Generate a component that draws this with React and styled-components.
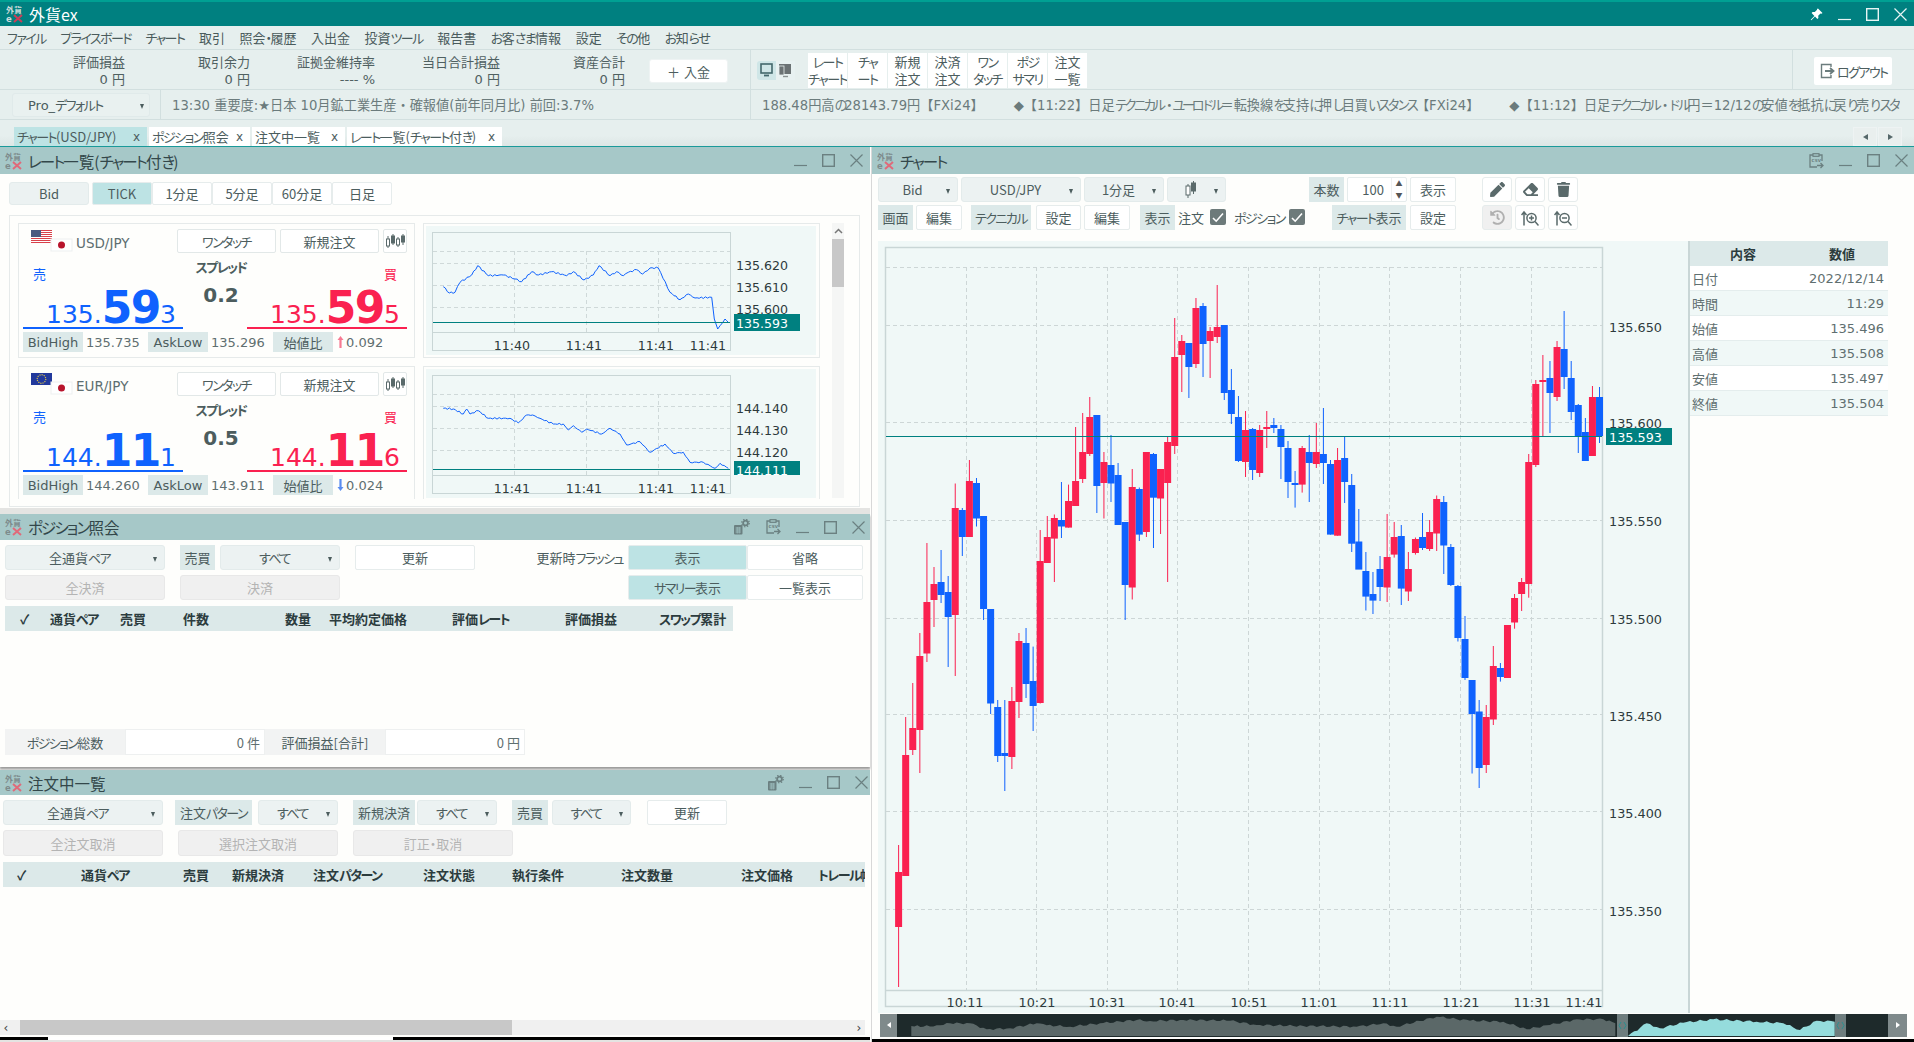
import React from 'react';
import styled, { createGlobalStyle } from 'styled-components';
import { FaPen, FaEraser, FaTrash, FaHistory } from 'react-icons/fa';

const Global = createGlobalStyle`
  html, body { margin: 0; padding: 0; width: 1914px; height: 1042px; overflow: hidden; background: #fefefc; }
  * { box-sizing: border-box; }
  body { font-family: "DejaVu Sans", "Noto Sans CJK JP", sans-serif; font-size: 13px; color: #4c5d5e; font-feature-settings: "palt"; }
`;

const Kana = styled.span`letter-spacing: var(--kana, -0.12em);`;
const k = s => {
  if (typeof s !== 'string') return s;
  return s.split(/([\u3040-\u30ff\u30fb]+)/).map((part, i) => (i % 2 ? <Kana key={i}>{part}</Kana> : part));
};

const Page = styled.div`width: 1914px; height: 1042px; display: flex; flex-direction: column; overflow: hidden; background: #fefefc;`;
const TitleBar = styled.div`height: 26px; flex: none; background: #008080; border-top: 2px solid #00a093; display: flex; align-items: center; padding-left: 6px; color: #fff; font-size: 16px;`;
const AppTitle = styled.span`margin-left: 5px; flex: 1; font-family: "Noto Sans CJK JP", sans-serif;`;
const Controls = styled.div`display: flex; align-items: center; gap: 15px; padding-right: ${p => p.$pr || 6}px; color: ${p => p.$c || '#6b8081'};`;
const MenuBar = styled.div`height: 24px; flex: none; background: #e6efee; border-bottom: 1px solid #d2dfdf; display: flex; align-items: center; padding-left: 7px; gap: 14.5px; font-family: "Noto Sans CJK JP", sans-serif; color: #4a5b5c;`;
const InfoBar = styled.div`height: 40px; flex: none; background: #e6efee; border-bottom: 1px solid #d2dfdf; display: flex;`;
const InfoCol = styled.div`width: 125px; text-align: right; font-size: 13px; line-height: 17px; padding-top: 4px; color: #4f6061;`;
const DepositBtn = styled.button`width: 79px; height: 24px; margin: 9px 0 0 24px; border: 1px solid #eef3f3; border-radius: 3px; background: #fff; font: inherit; color: #4c5d5e;`;
const Divider = styled.div`width: 1px; background: #d2dfdf; margin-left: ${p => p.$ml || 0}px; flex: none;`;
const DisplayToggle = styled.div`width: 38px; height: 19px; margin: 11px 0 0 6px; background: #cfe6e7; border-radius: 3px; display: flex;`;
const QuickGroup = styled.div`display: flex; gap: 1px; margin: 3px 0 0 13px; height: 35px;`;
const QuickBtn = styled.div`width: 39px; height: 35px; background: #fff; text-align: center; font-size: 13px; line-height: 17px; font-family: "Noto Sans CJK JP", sans-serif; white-space: pre; overflow: hidden; color: #4c5d5e;`;
const Spacer = styled.div`flex: 1;`;
const LogoutBtn = styled.div`width: 78px; height: 28px; margin: 7px 22px 0 21px; background: #fff; border-radius: 2px; display: flex; align-items: center; padding-left: 6px; gap: 2px; font-family: "Noto Sans CJK JP", sans-serif; font-size: 13px; white-space: nowrap;`;
const TickerBar = styled.div`height: 30px; flex: none; background: #e6efee; border-bottom: 1px solid #d2dfdf; display: flex; align-items: center; white-space: nowrap; overflow: hidden;`;
const LayoutSelect = styled.div`width: 138px; height: 24px; margin-left: 12px; border: 1px solid #e0eaea; border-radius: 3px; display: flex; align-items: center; justify-content: space-between; padding: 0 5px 0 15px; background: #e9f1f0;`;
const Caret = styled.span`width: 0; height: 0; border-left: 2.5px solid transparent; border-right: 2.5px solid transparent; border-top: 5px solid #4c5d5e; margin-top: 3px; flex: none;`;
const TickerSection = styled.div`--kana: -0.27em; font-feature-settings: normal; height: 29px; display: flex; align-items: center; flex: none; width: ${p => p.$w}px; border-left: 1px solid #d2dfdf; margin-left: ${p => p.$ml || 0}px; padding-left: ${p => p.$pl}px; color: #6b7b7c; overflow: hidden; font-size: 13.2px;`;
const TickerItem = styled.span`margin-right: 30px; flex: none;`;
const TabBar = styled.div`height: 27px; flex: none; background: linear-gradient(#e6efee 60%, #dde6e5); border-bottom: 1px solid #1a9a9a; display: flex; align-items: flex-end; padding-left: 14px; gap: 2px;`;
const Tab = styled.div`width: ${p => p.$w}px; height: 19px; background: ${p => p.$active ? '#bde3e4' : '#fff'}; display: flex; align-items: center; justify-content: space-between; padding: 0 7px 0 3px; white-space: nowrap; font-family: "Noto Sans CJK JP", "DejaVu Sans", sans-serif; font-size: 13px; overflow: hidden;`;
const TabClose = styled.span`font-family: "DejaVu Sans", sans-serif; font-size: 12px;`;
const TabNav = styled.div`margin-left: auto; margin-right: 12px; display: flex; gap: 1px;`;
const TabNavBtn = styled.div`width: 24px; height: 19px; background: #e9efee; border: 1px solid #eef3f3; display: flex; align-items: center; justify-content: center;`;
const TriSide = styled.span`width: 0; height: 0; border-top: 3px solid transparent; border-bottom: 3px solid transparent; ${p => p.$right ? 'border-left: 5px solid' : 'border-right: 5px solid'} ${p => p.$c || '#56686a'};`;

const Workspace = styled.div`flex: 1; display: flex; min-height: 0;`;
const LeftColumn = styled.div`width: 870px; flex: none; display: flex; flex-direction: column; background: #e4e4e2;`;
const Panel = styled.div`height: ${p => p.$h}px; margin-top: ${p => p.$mt || 0}px; flex: none; background: #fefefc; display: flex; flex-direction: column; overflow: hidden; box-shadow: ${p => p.$shadow ? '0 2px 2px #9a9a9a' : 'none'};`;
const PanelTitle = styled.div`height: ${p => p.$h || 27}px; flex: none; background: #a6c8c8; display: flex; align-items: center; padding-left: 5px; font-size: 15.5px; color: #33474a; font-family: "Noto Sans CJK JP", sans-serif;`;
const PanelName = styled.span`margin-left: 5px; flex: 1;`;

const ToolRow = styled.div`display: flex; height: ${p => p.$h || 24}px; margin-top: ${p => p.$mt || 0}px; padding-left: ${p => p.$pl || 0}px; flex: none; font-family: "Noto Sans CJK JP", "DejaVu Sans", sans-serif;`;
const SelectBox = styled.div`width: ${p => p.$w}px; margin-left: ${p => p.$ml || 0}px; background: #ecf2f2; border: 1px solid #e3ebeb; border-radius: 3px; display: flex; align-items: center; padding-right: 7px; flex: none;`;
const SelectText = styled.span`flex: 1; text-align: center; display: flex; justify-content: center; align-items: center;`;
const PlainBox = styled(SelectBox)`padding-right: 0; justify-content: center;`;
const FieldLabel = styled.div`width: ${p => p.$w}px; margin-left: ${p => p.$ml || 0}px; background: #dce9e9; display: flex; align-items: center; justify-content: center; flex: none; white-space: nowrap; overflow: hidden;`;
const Btn = styled.div`width: ${p => p.$w}px; margin-left: ${p => p.$ml || 0}px; background: ${p => p.$on ? '#bde3e4' : '#fff'}; border: 1px solid #e6ecec; border-radius: 2px; display: flex; align-items: center; justify-content: center; flex: none; white-space: nowrap; color: ${p => p.$c || 'inherit'};`;
const DisabledBtn = styled.div`width: ${p => p.$w}px; margin-left: ${p => p.$ml || 0}px; background: #f0f0f0; border: 1px solid #e8e8e8; border-radius: 3px; display: flex; align-items: center; justify-content: center; color: #b4b4b4; flex: none;`;
const PlainText = styled.div`margin-left: ${p => p.$ml || 0}px; width: ${p => p.$w}px; display: block; text-align: ${p => p.$right ? 'right' : 'left'}; line-height: 25px; white-space: nowrap; flex: none;`;

const RateBox = styled.div`flex: 1; margin: 10px 10px 1px 9px; border: 1px solid #e6eaea; padding: 7px 0 7px 8px; min-height: 0; display: flex; gap: 12px;`;
const RateList = styled.div`width: 802px; display: flex; flex-direction: column; gap: 8px; overflow: hidden;`;
const RateRow = styled.div`display: flex; gap: 8px; flex: none;`;
const RateCard = styled.div`width: 397px; height: 135px; border: 1px solid #e6eaea; padding: 5px 7px 0 4px; flex: none;`;
const CardTop = styled.div`display: flex; height: 24px;`;
const PairBox = styled.div`width: 154px; flex: none; display: flex; align-items: center; padding-left: 8px; padding-top: 3px; color: #5d6e70; font-size: 13.5px;`;
const CardBtn = styled.div`width: ${p => p.$w}px; margin-right: ${p => p.$last ? 0 : 4}px; border: 1px solid #e2e8e8; border-radius: 2px; display: flex; align-items: center; justify-content: center; font-family: "Noto Sans CJK JP", sans-serif; background: #fff; flex: none;`;
const PriceGrid = styled.div`display: grid; grid-template-columns: 160px 64px 160px; height: 76px;`;
const PriceCol = styled.div`display: flex; flex-direction: column; color: ${p => p.$c}; border-bottom: 2px solid ${p => p.$c};`;
const SideMark = styled.div`height: 14px; margin-top: 14px; font-size: 13px; line-height: 14px; font-family: "Noto Sans CJK JP", sans-serif; text-align: ${p => p.$right ? 'right' : 'left'}; padding: 0 10px;`;
const PriceRow = styled.div`height: 46px; padding-right: 7px; text-align: right; line-height: 46px; white-space: nowrap; padding-top: 4px;`;
const PriceSmall = styled.span`font-size: 25px;`;
const PriceBig = styled.span`font-size: 44px; font-weight: 700; letter-spacing: -1.4px;`;
const SpreadCol = styled.div`text-align: center; color: #4c5d5e; font-weight: 700; padding-left: 12px;`;
const SpreadLabel = styled.div`margin-top: 6px; font-size: 13px; line-height: 16px; font-family: "Noto Sans CJK JP", sans-serif; white-space: nowrap; margin-left: -10px; margin-right: -10px;`;
const SpreadValue = styled.div`font-size: 20px; line-height: 24px; margin-top: 8px;`;
const StatRow = styled.div`display: grid; grid-template-columns: 60px 65px 60px 65px 60px 1fr; height: 20px; margin-top: 3px;`;
const StatLabel = styled.div`background: #dce9e9; display: flex; align-items: center; justify-content: center; font-size: 13px; white-space: nowrap;`;
const StatValue = styled.div`display: flex; align-items: center; padding-left: 3px; font-size: 13px; color: #5f6f70; white-space: nowrap;`;
const ChartCard = styled.div`width: 397px; height: 135px; border: 1px solid #e6eaea; padding: 2px; flex: none; display: flex;`;
const Scroll = styled.div`width: 12px; height: 275px; background: #f5f6f5; display: flex; flex-direction: column; align-items: center; flex: none;`;
const ScrollUp = styled.div`height: 16px; display: flex; align-items: center; justify-content: center;`;
const ScrollThumb = styled.div`width: 12px; height: 48px; background: #c8c8c8;`;

const TableHead = styled.div`height: 25px; margin: 6px 0 0 ${p => p.$ml}px; width: ${p => p.$w}px; background: #dce9e9; display: flex; align-items: center; font-weight: 700; font-size: 13px; padding-left: ${p => p.$pl}px; overflow: hidden; flex: none; white-space: nowrap; color: #2c3c3e; font-family: "Noto Sans CJK JP", sans-serif;`;
const HeadCell = styled.div`width: ${p => p.$w}px; flex: none;`;
const GrowArea = styled.div`flex: 1;`;
const Footer = styled.div`display: flex; height: 26px; margin: 0 0 12px 5px; flex: none; font-family: "Noto Sans CJK JP", "DejaVu Sans", sans-serif;`;
const FootLabel = styled.div`width: 120px; background: #f2f3f3; display: flex; align-items: center; justify-content: center; white-space: nowrap;`;
const FootValue = styled.div`width: 140px; background: #fff; border: 1px solid #eef0f0; display: flex; align-items: center; justify-content: flex-end; padding-right: 4px; color: #5f6f70;`;
const HScroll = styled.div`height: 15px; margin: 0 5px 2px 0; background: #f0f0f0; display: flex; align-items: center; flex: none;`;
const HThumb = styled.div`width: 492px; height: 15px; background: #c8c8c8; margin-left: 8px;`;
const HArrow = styled.div`width: 12px; display: flex; justify-content: center; font-size: 12px; color: #444; line-height: 12px;`;
const HRest = styled.div`flex: 1;`;
const BlackStrip = styled.div`height: 3px; background: #000; display: flex; flex: none;`;
const WhiteBit = styled.div`width: 345px; margin-left: 48px; background: #fff;`;

const RightColumn = styled.div`flex: 1; margin-left: 1px; border-left: 1px solid #d8d8d8; display: flex; flex-direction: column; background: #fefefc; min-width: 0;`;
const ChartArea = styled.div`display: flex; margin: 11px 0 0 6px; height: 772px; flex: none;`;
const PlotBox = styled.div`width: 812px; height: 772px; background: #f0f8f7; flex: none; border-right: 2px solid #c9d6d6;`;
const SideTable = styled.div`width: 198px; flex: none;`;
const SideHead = styled.div`height: 25px; background: #dce9e9; display: grid; grid-template-columns: 106px 92px; align-items: center; font-weight: 700; text-align: center; color: #2c3c3e; font-family: "Noto Sans CJK JP", sans-serif;`;
const SideRow = styled.div`height: 25px; background: ${p => p.$alt ? '#f0f8f7' : '#fff'}; border-bottom: 1px solid #e4eded; display: flex; align-items: center; justify-content: space-between; padding: 0 4px 0 2px; color: #5f6f70;`;
const Navigator = styled.div`height: 23px; margin: 1px 7px 0 8px; flex: none; display: flex;`;
const IconBtn = styled.div`width: 30px; margin-left: ${p => p.$ml || 3}px; background: ${p => p.$off ? '#f0f0f0' : '#fff'}; border: 1px solid #e6ecec; border-radius: 3px; display: flex; align-items: center; justify-content: center; color: ${p => p.$off ? '#b0b0b0' : '#5a6a6b'}; flex: none; font-size: 15px;`;
const CheckBox = styled.div`width: 16px; height: 16px; margin: 4px 0 0 ${p => p.$ml}px; background: #6d7a7a; border-radius: 2px; color: #fff; display: flex; align-items: center; justify-content: center; flex: none;`;
const Spinner = styled.div`width: 60px; margin-left: 3px; background: #fff; border: 1px solid #e6ecec; border-radius: 2px; display: flex; flex: none;`;
const SpinVal = styled.div`flex: 1; display: flex; align-items: center; justify-content: flex-end; padding-right: 7px;`;
const SpinBtns = styled.div`width: 15px; border-left: 1px solid #eef0f0; display: flex; flex-direction: column; align-items: center; justify-content: space-around; font-size: 7px; line-height: 7px; color: #555;`;

const Logo = ({ s = 18 }) => (
  <svg width={s} height={s} viewBox="0 0 18 18" style={{ flex: 'none' }}>
    <text x="0" y="8" fontSize="8" fontWeight="700" fill="#7d8b8c" fontFamily="Noto Sans CJK JP">外貨</text>
    <text x="0" y="16.5" fontSize="8.5" fontWeight="700" fill="#7d8b8c" fontFamily="DejaVu Sans">e</text>
    <path d="M8 10l8 7M16 10l-8 7" stroke="#e06a7a" strokeWidth="2" />
  </svg>
);
const MainLogo = () => (
  <svg width="18" height="18" viewBox="0 0 18 18" style={{ flex: 'none' }}>
    <text x="0" y="8" fontSize="8" fontWeight="700" fill="#cfdcdc" fontFamily="Noto Sans CJK JP">外貨</text>
    <text x="0" y="16.5" fontSize="8.5" fontWeight="700" fill="#cfdcdc" fontFamily="DejaVu Sans">e</text>
    <path d="M8 10l8 7M16 10l-8 7" stroke="#cc3d58" strokeWidth="2" />
  </svg>
);
const Min = () => <svg width="13" height="13" viewBox="0 0 13 13" style={{ flex: 'none' }}><path d="M0 11.5h13" stroke="currentColor" strokeWidth="1.2" /></svg>;
const Max = () => <svg width="13" height="13" viewBox="0 0 13 13" style={{ flex: 'none' }}><rect x=".7" y=".7" width="11.6" height="11.6" fill="none" stroke="currentColor" strokeWidth="1.4" /></svg>;
const Close = () => <svg width="13" height="13" viewBox="0 0 13 13" style={{ flex: 'none' }}><path d="M.5.5l12 12M12.5.5l-12 12" stroke="currentColor" strokeWidth="1.2" /></svg>;
const Pin = () => <svg width="13" height="13" viewBox="0 0 13 13" style={{ flex: 'none' }}><path d="M8 .5l4.5 4.5-1 .7-1-.3-2.3 2.3.2 2.2-1 1L5 8.6 1.3 12.3.7 11.7 4.4 8 1.6 4.9l1-1 2.2.2L7.1 1.8l-.1-.9z" fill="#fff" /></svg>;
const CsvIcon = () => (
  <svg width="16" height="16" viewBox="0 0 16 16" style={{ flex: 'none' }}>
    <path d="M5 2H2v12h7M11 2h3v6" fill="none" stroke="#6b8081" strokeWidth="1.3" />
    <rect x="5" y=".7" width="6" height="2.6" fill="none" stroke="#6b8081" strokeWidth="1.2" />
    <text x="3.6" y="8.8" fontSize="4.2" fontWeight="700" fill="#6b8081" fontFamily="DejaVu Sans">CSV</text>
    <path d="M9 12.5h5.5M12.5 10l2.5 2.5-2.5 2.5" fill="none" stroke="#6b8081" strokeWidth="1.3" />
  </svg>
);
const CalcIcon = () => (
  <svg width="17" height="16" viewBox="0 0 17 16" style={{ flex: 'none' }}>
    <rect x="1" y="6" width="8.5" height="9.5" rx="1" fill="#6b8081" />
    <path d="M2.5 9h5.5M2.5 11h5.5M2.5 13h5.5M4.2 8v6.5M6.2 8v6.5" stroke="#a6c8c8" strokeWidth=".7" />
    <circle cx="12.5" cy="4" r="2.4" fill="none" stroke="#6b8081" strokeWidth="1.8" />
    <circle cx="12.5" cy="4" r="3.8" fill="none" stroke="#6b8081" strokeWidth="1.2" strokeDasharray="1.4 1.6" />
  </svg>
);
const Monitors = () => (
  <svg width="38" height="19" viewBox="0 0 38 19">
    <rect x="19" y="0" width="19" height="19" fill="#e8f1f1" />
    <rect x="4" y="3" width="11" height="9" fill="none" stroke="#43686c" strokeWidth="1.6" />
    <path d="M7 14.5h5" stroke="#43686c" strokeWidth="1.8" />
    <rect x="22" y="3" width="12" height="10" fill="#6b7274" />
    <rect x="22" y="5" width="5" height="9" fill="#6b7274" stroke="#e8f1f1" strokeWidth=".8" />
    <path d="M26 15.5h5" stroke="#8b9293" strokeWidth="1.4" />
  </svg>
);
const LogoutIcon = () => (
  <svg width="15" height="16" viewBox="0 0 15 16" style={{ flex: 'none' }}>
    <path d="M11 4V1.5H1.5v13H11V12" fill="none" stroke="#6b7c7d" strokeWidth="1.4" />
    <path d="M5 8h8M10 5l3.5 3L10 11" fill="none" stroke="#6b7c7d" strokeWidth="1.8" />
  </svg>
);
const CandleIcon = ({ c = '#5a6a6b' }) => (
  <svg width="20" height="16" viewBox="0 0 20 16">
    <g stroke={c} fill="none" strokeWidth="1">
      <path d="M3 3v12M8 1v11M13 4v10M18 1v11" />
      <rect x="1.5" y="6" width="3" height="7" fill="#fff" />
      <rect x="6.5" y="3" width="3" height="7" fill={c} />
      <rect x="11.5" y="6" width="3" height="6" fill="#fff" />
      <rect x="16.5" y="3" width="3" height="6" fill={c} />
    </g>
  </svg>
);
const SmallCandle = () => (
  <svg width="12" height="18" viewBox="0 0 12 18">
    <g stroke="#5a6a6b" fill="none"><path d="M3 3v14M8.5 0v13" /><rect x="1" y="5" width="4" height="9" fill="#fff" /><rect x="6.5" y="2" width="4" height="8" fill="#5a6a6b" /></g>
  </svg>
);
const ZoomArrow = ({ minus }) => (
  <svg width="18" height="18" viewBox="0 0 18 18">
    <g fill="none" stroke="#5a6a6b" strokeWidth="1.5">
      <path d="M3 3.5v13M.5 6L3 3l2.5 3" />
      <circle cx="10.5" cy="9" r="4.6" />
      <path d="M14 12.5l3.5 4" />
      <path d="M8 9h5" />
      {!minus && <path d="M10.5 6.5v5" />}
    </g>
  </svg>
);
const Check = () => <svg width="12" height="11" viewBox="0 0 12 11"><path d="M1 6l3.2 3.2L11 1.5" fill="none" stroke="#fff" strokeWidth="1.6" /></svg>;

const UsJp = ({ eu }) => (
  <svg width="45" height="24" viewBox="0 0 45 24" style={{ flex: 'none', marginTop: -3 }}>
    {eu ? (
      <g><rect x="0" y="1" width="21" height="12" fill="#22399c" /><circle cx="10.5" cy="7" r="4.3" fill="none" stroke="#d6c04a" strokeWidth="1.2" strokeDasharray="1.2 1" /></g>
    ) : (
      <g>
        <rect x="0" y="1" width="21" height="13" fill="#fff" />
        {[1, 3, 5, 7, 9, 11, 13].map(y => <rect key={y} x="0" y={y} width="21" height="1" fill="#d8414a" />)}
        <rect x="0" y="1" width="10" height="7" fill="#4a5a80" />
      </g>
    )}
    <rect x="20" y="10" width="21" height="12" fill="#fff" stroke="#edf0f0" />
    <circle cx="30.5" cy="16" r="3.5" fill="#b8142c" />
  </svg>
);

const zig = (pts, seed) => {
  const out = [];
  for (let i = 0; i < pts.length - 1; i++) {
    const [x0, y0] = pts[i]; const [x1, y1] = pts[i + 1];
    const n = Math.max(1, Math.round((x1 - x0) / 2.2));
    for (let j = 0; j < n; j++) {
      const t = j / n;
      const w = j === 0 ? 0 : Math.sin((i * 7 + j) * 2.7 + seed) * 0.8;
      out.push(`${(x0 + (x1 - x0) * t).toFixed(1)},${(y0 + (y1 - y0) * t + w).toFixed(1)}`);
    }
  }
  const l = pts[pts.length - 1];
  out.push(`${l[0]},${l[1]}`);
  return out.join(' ');
};
const LINE1 = [[70,413],[88,432],[105,430],[120,400],[155,378],[173,350],[205,380],[250,378],[285,390],[305,398],[335,368],[355,378],[395,368],[440,380],[460,368],[492,393],[520,378],[537,350],[570,380],[590,368],[610,380],[625,370],[650,362],[668,375],[690,357],[715,357],[750,430],[780,452],[805,435],[825,447],[875,445],[883,510],[893,540],[915,510],[925,520]].map(([x, y]) => [x / 3 - 6, y / 3 - 77]);
const LINE2 = [[70,778],[100,780],[130,795],[140,780],[150,795],[175,785],[205,808],[270,808],[295,822],[320,798],[338,798],[360,808],[400,825],[430,825],[445,843],[460,830],[485,850],[500,840],[545,855],[570,838],[600,855],[620,888],[660,878],[690,910],[735,885],[760,913],[790,910],[810,940],[850,940],[885,958],[900,943],[925,958]].map(([x, y]) => [x / 3 - 6, y / 3 - 220]);

const MiniChart = ({ id, line, labels, cur, curRect, lineY, curText, times }) => (
  <svg width="390" height="129" viewBox="0 0 390 129" style={{ background: '#f0f8f7', display: 'block' }} fontFamily="DejaVu Sans" fontSize="12.6">
    <defs><clipPath id={id}><rect x="308" y={curRect[0]} width="66" height={curRect[1]} /></clipPath></defs>
    <rect x="6.5" y="6.5" width="298" height="118" fill="none" stroke="#c9d6d6" />
    {[25, 37, 59, 81].map(y => <path key={y} d={`M7 ${y}.5H304`} stroke="#cfd9d9" strokeDasharray="4 3" />)}
    {[88, 160, 232].map(x => <path key={x} d={`M${x}.5 25V106`} stroke="#cfd9d9" strokeDasharray="4 3" />)}
    <path d="M7 106.5H304" stroke="#c9d6d6" />
    <polyline points={zig(line, id.length)} fill="none" stroke="#0f62fe" strokeWidth="1" />
    <path d={`M7 ${lineY}H304`} stroke="#008080" />
    {labels.map((t, i) => <text key={t} x="310" y={44 + i * 22} fill="#2d3a3c">{t}</text>)}
    <rect x="308" y={curRect[0]} width="66" height={curRect[1]} fill="#008080" />
    <text x="310" y={curText} fill="#fff" clipPath={`url(#${id})`}>{cur}</text>
    {times.map((t, i) => <text key={i} x={[86, 158, 230, 282][i]} y="124" textAnchor="middle" fill="#2d3a3c">{t}</text>)}
  </svg>
);

const Rate = ({ eu, pair, bidPre, bidBig, bidEnd, askEnd, spread, high, low, diff, up, ...chart }) => (
  <RateRow>
    <RateCard>
      <CardTop>
        <PairBox><UsJp eu={eu} />{pair}</PairBox>
        <CardBtn $w={99}>{k('ワンタッチ')}</CardBtn>
        <CardBtn $w={99}>{k('新規注文')}</CardBtn>
        <CardBtn $w={24} $last><CandleIcon /></CardBtn>
      </CardTop>
      <PriceGrid>
        <PriceCol $c="#0f62fe">
          <SideMark>売</SideMark>
          <PriceRow><PriceSmall>{bidPre}.</PriceSmall><PriceBig>{bidBig}</PriceBig><PriceSmall>{bidEnd}</PriceSmall></PriceRow>
        </PriceCol>
        <SpreadCol>
          <SpreadLabel>{k('スプレッド')}</SpreadLabel>
          <SpreadValue>{spread}</SpreadValue>
        </SpreadCol>
        <PriceCol $c="#fa2150">
          <SideMark $right>買</SideMark>
          <PriceRow><PriceSmall>{bidPre}.</PriceSmall><PriceBig>{bidBig}</PriceBig><PriceSmall>{askEnd}</PriceSmall></PriceRow>
        </PriceCol>
      </PriceGrid>
      <StatRow>
        <StatLabel>BidHigh</StatLabel><StatValue>{high}</StatValue>
        <StatLabel>AskLow</StatLabel><StatValue>{low}</StatValue>
        <StatLabel>始値比</StatLabel>
        <StatValue>
          <svg width="7" height="12" viewBox="0 0 7 12" style={{ marginRight: 2, marginLeft: 1 }}>
            <path d={up ? 'M3.5 0l3 4H4.6v8H2.4V4H.5z' : 'M3.5 12l3-4H4.6V0H2.4v8H.5z'} fill={up ? '#f77b93' : '#5a8cf0'} />
          </svg>
          {diff}
        </StatValue>
      </StatRow>
    </RateCard>
    <ChartCard><MiniChart line={chart.line} id={chart.cid} labels={chart.labels} cur={chart.cur} curRect={chart.curRect} lineY={chart.lineY} curText={chart.curText} times={chart.times} /></ChartCard>
  </RateRow>
);

const C = [
['r',845,987,872,927],['r',717,876,755,876],['r',683,755,728,750],['r',633,773,656,730],['r',543,662,602,653.5],
['r',567,627,584,600],['b',550,603,582,595],['b',576,667,592,617],['r',483.5,676,508,615],['b',508,556,510,537],
['r',460,537,481,537],['b',478,526.5,483,518.5],['b',516,620,516,609],['b',609,714,609,703.5],['b',700,762,707,756],
['b',700,791,753,756],['r',687,769,701,757],['r',633,718,641,702],['b',628,698,643,684],['b',646.6,731,681,706],
['r',530,703.5,561,703],['r',516,563,537,563],['r',514.5,582,518,538.6],['b',482,538,520,526.5],['r',484.6,527.6,501,527.6],
['r',427,506,481,506],['r',413,483,452,479],['r',397,456,417,454],['b',415,513,415,486],['r',452,518.5,462,483],
['b',435,502,465,483.5],['b',463,525,475,525],['b',522,620,522,585],['r',469,599.5,487,587.5],['b',487.5,541,489,534.6],
['r',452,537,452,532],['b',453,548,454,497.7],['r',469,534,469,498.5],['r',436,582,442,483],['r',318,454,357,446],
['r',335,392,341,355],['b',343,398,343,367],['r',298,368,308,364],['b',303,377,306,344],['r',327,378,331,341],
['r',285,343,327,337],['b',325,400,325,393],['b',369,424,390,414],['b',396,462,417,461],['r',411,477,430,462],
['b',428,480,429,470],['r',425,477,430,473],['r',411,448,427,429],['b',418,433,425,428],['b',425,479,429,447],
['b',441,498,448,482],['b',471,507.6,483,484],['r',446,492.6,448,484.6],['b',435,502,452,463],['r',423,468,452,464],
['b',408,484,454,463],['b',460,534.6,464,534.6],['r',448,535.7,460,535.7],['b',437,503,458,482],['b',474,552,485,543.7],
['b',509,569,541.5,569.6],['b',552,610.5,571,596.6],['b',572,614,594,600.6],['b',556,601,569,587],['r',514,602,557,587.5],
['r',522,557.6,537,554.6],['b',525,605,536,588.6],['r',552,601,569,591.5],['r',537.5,554.6,539,553],['b',513,550,537,548],
['r',520,551,532,549],['r',495.5,551,499,533.5],['b',496,574,502,545.5],['b',544,586,547,585],['b',585,641.5,586,638],
['b',616,680,639,678],['b',680,773.5,680,714],['b',700,788,711.5,768],['r',705,773,717,765],['r',646,725,666,719.5],
['b',663,681.6,668,677],['r',625,678,625,678],['r',594,628.7,598,622.5],['r',578,611,582,594],['r',454,597.7,462,584],
['r',380,467,384,465],['r',355,436,380,382],['b',361,433,378,393],['r',341,401,347,397],['b',311,389,349,377],
['b',361,420,378,412],['b',404,453,405,436],['b',418,461,432,461],['r',386,456,397,456],['b',387,443,397,436],
];

const PriceChart = () => (
  <svg width="810" height="772" viewBox="878 241 810 772" fontFamily="DejaVu Sans" fontSize="12.8" style={{ display: 'block' }}>
    <rect x="885.5" y="247.5" width="717" height="759" fill="none" stroke="#c9d6d6" strokeWidth="1.5" />
    {[267, 325, 422, 520, 618, 714, 811, 909].map(y => <path key={y} d={`M886 ${y}.5H1602`} stroke="#cdd6d6" strokeDasharray="4 3" />)}
    {[966, 1036, 1107, 1177, 1248, 1319, 1389, 1460, 1531].map(x => <path key={x} d={`M${x}.5 267V990`} stroke="#cdd6d6" strokeDasharray="4 3" />)}
    <path d="M886 990.5H1602" stroke="#c9d6d6" strokeWidth="1.5" />
    {C.map(([c, wt, wb, bt, bb], i) => {
      const x = 898.6 + 7.08 * i;
      const col = c === 'r' ? '#fa2150' : '#0f62fe';
      return (
        <g key={i} fill={col}>
          <rect x={x - 0.5} y={wt} width="1" height={wb - wt} />
          <rect x={x - 3.5} y={bt} width="7" height={Math.max(bb - bt, 2)} />
        </g>
      );
    })}
    <path d="M886 436.5H1602" stroke="#008080" />
    {[['135.650', 327], ['135.600', 423], ['135.550', 521], ['135.500', 618.6], ['135.450', 715.7], ['135.400', 812.6], ['135.350', 911]].map(([t, y]) => (
      <text key={t} x="1609" y={y + 5} fill="#2d3a3c">{t}</text>
    ))}
    <rect x="1606" y="428" width="66" height="17" fill="#008080" />
    <text x="1609" y="442" fill="#fff">135.593</text>
    {[['10:11', 965], ['10:21', 1037], ['10:31', 1107], ['10:41', 1177], ['10:51', 1249], ['11:01', 1319], ['11:11', 1390], ['11:21', 1461], ['11:31', 1532], ['11:41', 1584]].map(([t, x]) => (
      <text key={t} x={x} y="1007" textAnchor="middle" fill="#2d3a3c">{t}</text>
    ))}
  </svg>
);

const zx = x => (x / 1.5).toFixed(1);
const zy = y => ((y - 162) / 3).toFixed(1);
const rough = (pts, seed) => {
  const out = [];
  for (let i = 0; i < pts.length - 1; i++) {
    const [x0, y0] = pts[i]; const [x1, y1] = pts[i + 1];
    const n = Math.max(1, Math.round((x1 - x0) / 5));
    for (let j = 0; j < n; j++) {
      const t = j / n;
      out.push([x0 + (x1 - x0) * t, y0 + (y1 - y0) * t + (j ? Math.sin((i + j) * 1.9 + seed) * 3 : 0)]);
    }
  }
  out.push(pts[pts.length - 1]);
  return out;
};
const GRAY = [...rough([[62,198],[80,200],[100,196],[120,190],[150,190],[175,208],[210,205],[250,190],[265,196],[300,200],[345,190],[400,180],[420,183],[470,180],[540,182],[580,195],[650,198],[730,200],[770,190],[790,200],[850,170],[900,182],[950,185],[985,208],[1020,195],[1060,178],[1100,178],[1118,190]], 1), [1118,228], [62,228]];
const TEAL = [[1137,228], ...rough([[1137,228],[1165,190],[1185,205],[1220,188],[1265,178],[1330,185],[1370,190],[1395,210],[1420,182],[1447,185]], 2), [1447,228]];
const Nav = () => (
  <svg width="1027" height="23" viewBox="10 0 1027 23" style={{ display: 'block' }}>
    <rect x="10" y="0" width="1027" height="23" fill="#1e2a2b" />
    <rect x="10" y="0" width="17" height="23" fill="#7f8a8b" />
    <path d="M21 8v6l-4-3z" fill="#fff" />
    <polygon points={GRAY.map(([x, y]) => `${zx(x)},${zy(y)}`).join(' ')} fill="#5b6868" />
    <polygon points={TEAL.map(([x, y]) => `${zx(x)},${zy(y)}`).join(' ')} fill="#95dcdc" />
    <rect x="747" y="0" width="11" height="23" fill="#6e7d7e" />
    <rect x="965" y="0" width="11" height="23" fill="#6e7d7e" />
    <path d="M751 8l-2 3.5 2 3.5M754 8l2 3.5-2 3.5M969 8l-2 3.5 2 3.5M972 8l2 3.5-2 3.5" stroke="#2a8f90" fill="none" />
    <rect x="1018" y="0" width="19" height="23" fill="#7f8a8b" />
    <path d="M1026 8v6l4-3z" fill="#fff" />
  </svg>
);

const Sel = ({ w, ml, children }) => <SelectBox $w={w} $ml={ml}><SelectText>{k(children)}</SelectText><Caret /></SelectBox>;
const WinControls = ({ pr, children }) => <Controls $pr={pr}>{children}<Min /><Max /><Close /></Controls>;

const posHead = [['✓', 30], ['通貨ペア', 70], ['売買', 63], ['件数', 102], ['数量', 44], ['平均約定価格', 123], ['評価レート', 113], ['評価損益', 94], ['スワップ累計', 74]];
const ordHead = [['✓', 64], ['通貨ペア', 102], ['売買', 49], ['新規決済', 81], ['注文パターン', 110], ['注文状態', 89], ['執行条件', 109], ['注文数量', 120], ['注文価格', 77], ['トレール幅', 60]];
const TIMES1 = ['11:40', '11:41', '11:41', '11:41'];

export default function App() {
  return (
    <Page>
      <Global />
      <TitleBar>
        <MainLogo /><AppTitle>外貨ex</AppTitle>
        <Controls $pr={7} $c="#e8f4f4"><Pin /><Min /><Max /><Close /></Controls>
      </TitleBar>
      <MenuBar>
        {['ファイル', 'プライスボード', 'チャート', '取引', '照会・履歴', '入出金', '投資ツール', '報告書', 'お客さま情報', '設定', 'その他', 'お知らせ'].map(m => <span key={m}>{k(m)}</span>)}
      </MenuBar>
      <InfoBar>
        {[['評価損益', '0 円'], ['取引余力', '0 円'], ['証拠金維持率', '---- %'], ['当日合計損益', '0 円'], ['資産合計', '0 円']].map(([a, b]) => (
          <InfoCol key={a}>{a}<br />{b}</InfoCol>
        ))}
        <DepositBtn>＋ 入金</DepositBtn>
        <Divider $ml={22} />
        <DisplayToggle><Monitors /></DisplayToggle>
        <QuickGroup>
          {['レート\nチャート', 'チャ\nート', '新規\n注文', '決済\n注文', 'ワン\nタッチ', 'ポジ\nサマリ', '注文\n一覧'].map(q => <QuickBtn key={q}>{k(q)}</QuickBtn>)}
        </QuickGroup>
        <Spacer />
        <Divider />
        <LogoutBtn><LogoutIcon />{k('ログアウト')}</LogoutBtn>
      </InfoBar>
      <TickerBar>
        <LayoutSelect><span>Pro_{k('デフォルト')}</span><Caret /></LayoutSelect>
        <TickerSection $w={590} $ml={10} $pl={11}>13:30 重要度:★日本 10月鉱工業生産・確報値(前年同月比) 前回:3.7%</TickerSection>
        <TickerSection $w={1150} $pl={11}>
          <TickerItem>{k('188.48円高の28143.79円【FXi24】')}</TickerItem>
          <TickerItem>{k('◆【11:22】日足テクニカル・ユーロドル＝転換線を支持に押し目買いスタンス【FXi24】')}</TickerItem>
          <TickerItem>{k('◆【11:12】日足テクニカル・ドル円＝12/12の安値を抵抗に戻り売りスタンス【FXi24】')}</TickerItem>
        </TickerSection>
      </TickerBar>
      <TabBar>
        <Tab $w={133} $active><span>{k('チャート(USD/JPY)')}</span><TabClose>x</TabClose></Tab>
        <Tab $w={101}><span>{k('ポジション照会')}</span><TabClose>x</TabClose></Tab>
        <Tab $w={93}><span>{k('注文中一覧')}</span><TabClose>x</TabClose></Tab>
        <Tab $w={155}><span>{k('レート一覧(チャート付き)')}</span><TabClose>x</TabClose></Tab>
        <TabNav>
          <TabNavBtn><TriSide /></TabNavBtn>
          <TabNavBtn><TriSide $right /></TabNavBtn>
        </TabNav>
      </TabBar>
      <Workspace>
        <LeftColumn>
          <Panel $h={361}>
            <PanelTitle><Logo /><PanelName>{k('レート一覧(チャート付き)')}</PanelName><WinControls pr={7} /></PanelTitle>
            <ToolRow $mt={8} $h={23} $pl={9}>
              <PlainBox $w={80}>Bid</PlainBox>
              <Btn $w={60} $ml={3} $on>TICK</Btn>
              <Btn $w={60}>1分足</Btn>
              <Btn $w={60}>5分足</Btn>
              <Btn $w={60}>60分足</Btn>
              <Btn $w={60}>日足</Btn>
            </ToolRow>
            <RateBox>
              <RateList>
                <Rate pair="USD/JPY" bidPre="135" bidBig="59" bidEnd="3" askEnd="5" spread="0.2" high="135.735" low="135.296" diff="0.092" up
                  cid="c1" line={LINE1} labels={['135.620', '135.610', '135.600']} cur="135.593" curRect={[88, 17]} lineY="96.5" curText="101.5" times={TIMES1} />
                <Rate eu pair="EUR/JPY" bidPre="144" bidBig="11" bidEnd="1" askEnd="6" spread="0.5" high="144.260" low="143.911" diff="0.024"
                  cid="c22" line={LINE2} labels={['144.140', '144.130', '144.120']} cur="144.111" curRect={[92, 14]} lineY="100.5" curText="106" times={['11:41', '11:41', '11:41', '11:41']} />
              </RateList>
              <Scroll>
                <ScrollUp><svg width="9" height="6" viewBox="0 0 9 6"><path d="M1 5l3.5-3.5L8 5" fill="none" stroke="#777" strokeWidth="1.5" /></svg></ScrollUp>
                <ScrollThumb />
              </Scroll>
            </RateBox>
          </Panel>

          <Panel $h={253} $mt={6} $shadow>
            <PanelTitle $h={26}><Logo /><PanelName>{k('ポジション照会')}</PanelName><WinControls pr={5}><CalcIcon /><CsvIcon /></WinControls></PanelTitle>
            <ToolRow $mt={5} $h={25} $pl={5}>
              <Sel w={160}>全通貨ペア</Sel>
              <FieldLabel $w={35} $ml={15}>売買</FieldLabel>
              <Sel w={120} ml={5}>すべて</Sel>
              <Btn $w={120} $ml={15}>更新</Btn>
              <PlainText $w={148} $right>{k('更新時フラッシュ')}</PlainText>
              <Btn $w={119} $ml={5} $on>表示</Btn>
              <Btn $w={116}>省略</Btn>
            </ToolRow>
            <ToolRow $mt={5} $h={25} $pl={5}>
              <DisabledBtn $w={160}>全決済</DisabledBtn>
              <DisabledBtn $w={160} $ml={15}>決済</DisabledBtn>
              <Btn $w={119} $ml={288} $on>{k('サマリー表示')}</Btn>
              <Btn $w={116}>一覧表示</Btn>
            </ToolRow>
            <TableHead $ml={5} $w={728} $pl={15}>
              {posHead.map(([t, w]) => <HeadCell key={t} $w={w}>{k(t)}</HeadCell>)}
            </TableHead>
            <GrowArea />
            <Footer>
              <FootLabel>{k('ポジション総数')}</FootLabel>
              <FootValue>0 件</FootValue>
              <FootLabel>評価損益[合計]</FootLabel>
              <FootValue>0 円</FootValue>
            </Footer>
          </Panel>

          <Panel $h={270} $mt={3}>
            <PanelTitle $h={25}><Logo /><PanelName>注文中一覧</PanelName><WinControls pr={2}><CalcIcon /></WinControls></PanelTitle>
            <ToolRow $mt={5} $h={25} $pl={3}>
              <Sel w={160}>全通貨ペア</Sel>
              <FieldLabel $w={77} $ml={12}>{k('注文パターン')}</FieldLabel>
              <Sel w={80} ml={6}>すべて</Sel>
              <FieldLabel $w={62} $ml={15}>新規決済</FieldLabel>
              <Sel w={80} ml={2}>すべて</Sel>
              <FieldLabel $w={36} $ml={15}>売買</FieldLabel>
              <Sel w={79} ml={4}>すべて</Sel>
              <Btn $w={80} $ml={16}>更新</Btn>
            </ToolRow>
            <ToolRow $mt={5} $h={26} $pl={3}>
              <DisabledBtn $w={160}>全注文取消</DisabledBtn>
              <DisabledBtn $w={160} $ml={15}>選択注文取消</DisabledBtn>
              <DisabledBtn $w={160} $ml={15}>訂正・取消</DisabledBtn>
            </ToolRow>
            <TableHead $ml={3} $w={862} $pl={14}>
              {ordHead.map(([t, w]) => <HeadCell key={t} $w={w}>{k(t)}</HeadCell>)}
            </TableHead>
            <GrowArea />
            <HScroll>
              <HArrow>‹</HArrow><HThumb /><HRest /><HArrow>›</HArrow>
            </HScroll>
            <BlackStrip><WhiteBit /></BlackStrip>
          </Panel>
        </LeftColumn>

        <RightColumn>
          <PanelTitle><Logo /><PanelName>{k('チャート')}</PanelName><WinControls pr={6}><CsvIcon /></WinControls></PanelTitle>
          <ToolRow $mt={3} $h={25} $pl={6}>
            <Sel w={80}>Bid</Sel>
            <Sel w={120} ml={3}>USD/JPY</Sel>
            <Sel w={80} ml={3}>1分足</Sel>
            <Sel w={59} ml={3}><SmallCandle /></Sel>
            <FieldLabel $w={35} $ml={83}>本数</FieldLabel>
            <Spinner><SpinVal>100</SpinVal><SpinBtns><span>▲</span><span>▼</span></SpinBtns></Spinner>
            <Btn $w={46} $ml={3}>表示</Btn>
            <IconBtn $ml={26}><FaPen /></IconBtn>
            <IconBtn><FaEraser /></IconBtn>
            <IconBtn><FaTrash /></IconBtn>
          </ToolRow>
          <ToolRow $mt={3} $h={25} $pl={6}>
            <FieldLabel $w={35}>画面</FieldLabel>
            <Btn $w={46} $ml={3}>編集</Btn>
            <FieldLabel $w={60} $ml={9}>{k('テクニカル')}</FieldLabel>
            <Btn $w={45} $ml={5}>設定</Btn>
            <Btn $w={46} $ml={3}>編集</Btn>
            <FieldLabel $w={35} $ml={10}>表示</FieldLabel>
            <PlainText $w={26} $ml={3}>注文</PlainText>
            <CheckBox $ml={6}><Check /></CheckBox>
            <PlainText $w={50} $ml={8}>{k('ポジション')}</PlainText>
            <CheckBox $ml={5}><Check /></CheckBox>
            <FieldLabel $w={74} $ml={27}>{k('チャート表示')}</FieldLabel>
            <Btn $w={46} $ml={4}>設定</Btn>
            <IconBtn $off $ml={26}><FaHistory /></IconBtn>
            <IconBtn><ZoomArrow /></IconBtn>
            <IconBtn><ZoomArrow minus /></IconBtn>
          </ToolRow>
          <ChartArea>
            <PlotBox><PriceChart /></PlotBox>
            <SideTable>
              <SideHead><span>内容</span><span>数値</span></SideHead>
              {[['日付', '2022/12/14'], ['時間', '11:29'], ['始値', '135.496'], ['高値', '135.508'], ['安値', '135.497'], ['終値', '135.504']].map(([a, b], i) => (
                <SideRow key={a} $alt={i % 2 === 1}><span>{a}</span><span>{b}</span></SideRow>
              ))}
            </SideTable>
          </ChartArea>
          <Navigator><Nav /></Navigator>
          <GrowArea />
          <BlackStrip />
        </RightColumn>
      </Workspace>
    </Page>
  );
}
